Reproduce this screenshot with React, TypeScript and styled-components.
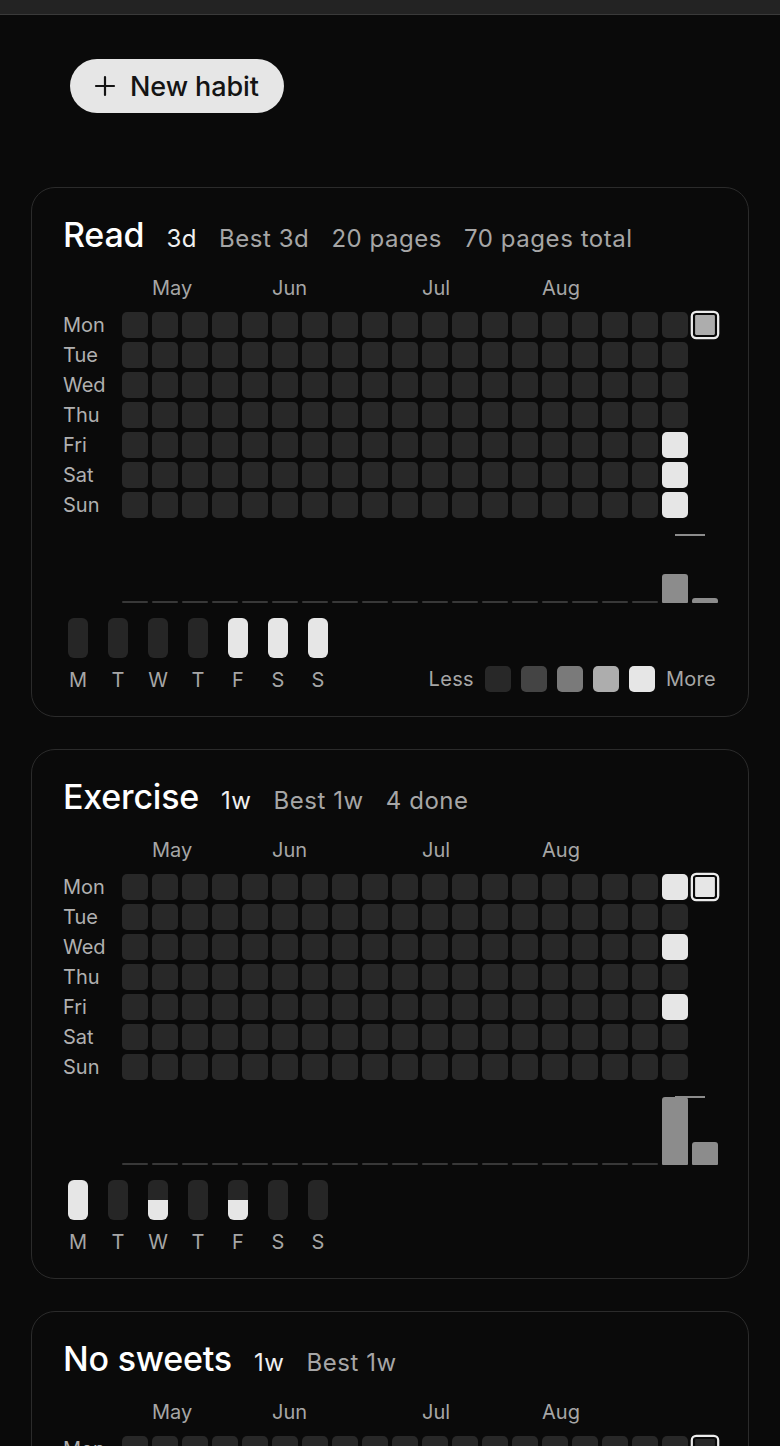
import styled, { createGlobalStyle } from "styled-components";

const GlobalStyle = createGlobalStyle`
  html, body {
    margin: 0;
    padding: 0;
    background: #0a0a0a;
    font-family: Inter, "Noto Sans", "Liberation Sans", sans-serif;
    color: #ededed;
  }
`;

const LEVELS = ["#282828", "#444444", "#7a7a7a", "#adadad", "#e6e6e6"];
const WEEKS = 20;
const DAYS = ["Mon", "Tue", "Wed", "Thu", "Fri", "Sat", "Sun"];
const SHORT = ["M", "T", "W", "T", "F", "S", "S"];
const MONTHS = [
  { label: "May", col: 1 },
  { label: "Jun", col: 5 },
  { label: "Jul", col: 10 },
  { label: "Aug", col: 14 },
];

type Habit = {
  name: string;
  stats: string[];
  // key "week-day" -> level index
  filled: Record<string, number>;
  today: number;
  weekBars: number[];
  weekdays: number[];
  legend?: boolean;
};

const habits: Habit[] = [
  {
    name: "Read",
    stats: ["3d", "Best 3d", "20 pages", "70 pages total"],
    filled: { "18-4": 4, "18-5": 4, "18-6": 4 },
    today: 3,
    weekBars: [...Array(18).fill(0), 60 / 140, 10 / 140],
    weekdays: [0, 0, 0, 0, 1, 1, 1],
    legend: true,
  },
  {
    name: "Exercise",
    stats: ["1w", "Best 1w", "4 done"],
    filled: { "18-0": 4, "18-2": 4, "18-4": 4 },
    today: 4,
    weekBars: [...Array(18).fill(0), 1, 1 / 3],
    weekdays: [1, 0, 0.5, 0, 0.5, 0, 0],
  },
  {
    name: "No sweets",
    stats: ["1w", "Best 1w"],
    filled: {},
    today: 0,
    weekBars: [...Array(20).fill(0)],
    weekdays: [0, 0, 0, 0, 0, 0, 0],
  },
];

const TopBar = styled.div`
  height: 14px;
  background: #232323;
  border-bottom: 1px solid #3a3a3a;
`;

const Page = styled.main`
  padding: 44px 31px 40px;
  display: flex;
  flex-direction: column;
  gap: 32px;
`;

const Toolbar = styled.div`
  padding-left: 39px;
  margin-bottom: 42px;
`;

const NewButton = styled.button`
  display: inline-flex;
  align-items: center;
  gap: 14px;
  height: 54px;
  padding: 0 25px 0 24px;
  border: none;
  border-radius: 27px;
  background: #e6e6e6;
  color: #141414;
  font-family: inherit;
  font-size: 27px;
  font-weight: 500;
  letter-spacing: -0.1px;
  cursor: pointer;
`;

const Card = styled.section`
  border: 1px solid #2b2b2b;
  border-radius: 24px;
  padding: 31px 31px 24px;
`;

const Header = styled.div`
  display: flex;
  align-items: baseline;
  gap: 22px;
  height: 32px;
  line-height: 32px;
`;

const Title = styled.h2`
  margin: 0;
  font-size: 34px;
  font-weight: 500;
  color: #ffffff;
  letter-spacing: -0.2px;
`;

const Stat = styled.span<{ $strong?: boolean }>`
  font-size: 24px;
  letter-spacing: 0.55px;
  color: ${(p) => (p.$strong ? "#f0f0f0" : "#a6a6a6")};
`;

const Body = styled.div`
  display: grid;
  grid-template-columns: 59px 1fr;
  margin-top: 25px;
`;

const WeekGrid = styled.div`
  display: grid;
  grid-template-columns: repeat(${WEEKS}, 26px);
  column-gap: 4px;
`;

const MonthRow = styled(WeekGrid)`
  grid-column: 2;
  height: 24px;
  margin-bottom: 12px;
`;

const MonthLabel = styled.span<{ $col: number }>`
  grid-column: ${(p) => p.$col + 1} / span 3;
  font-size: 20px;
  line-height: 24px;
  color: #a6a6a6;
`;

const DayLabels = styled.div`
  grid-column: 1;
  display: flex;
  flex-direction: column;
  gap: 4px;
`;

const DayLabel = styled.span`
  height: 26px;
  line-height: 26px;
  font-size: 20px;
  color: #b0b0b0;
`;

const Cells = styled(WeekGrid)`
  grid-template-rows: repeat(7, 26px);
  grid-auto-flow: column;
  row-gap: 4px;
`;

const Cell = styled.div<{ $color: string; $today?: boolean; $empty?: boolean }>`
  width: 26px;
  height: 26px;
  border-radius: 5px;
  box-sizing: border-box;
  background: ${(p) => (p.$empty ? "transparent" : p.$color)};
  ${(p) =>
    p.$today &&
    `
    border: 2px solid #ececec;
    box-shadow: inset 0 0 0 2px #0a0a0a;
    transform: scale(1.1);
  `}
`;

const Chart = styled(WeekGrid)`
  grid-column: 2;
  position: relative;
  height: 70px;
  margin-top: 15px;
  align-items: end;
`;

const Bar = styled.div<{ $empty: boolean }>`
  background: ${(p) => (p.$empty ? "#383838" : "#8c8c8c")};
  border-radius: ${(p) => (p.$empty ? "1px" : "3px 3px 1px 1px")};
`;

const Marker = styled.div`
  position: absolute;
  top: 1px;
  left: 553px;
  width: 30px;
  height: 2px;
  background: #8c8c8c;
`;

const Footer = styled.div`
  display: flex;
  justify-content: space-between;
  align-items: flex-end;
  margin-top: 15px;
`;

const Weekdays = styled.div`
  display: grid;
  grid-template-columns: repeat(7, 30px);
  column-gap: 10px;
  justify-items: center;
  row-gap: 10px;
`;

const DayBar = styled.div<{ $fill: number }>`
  width: 20px;
  height: 40px;
  border-radius: 6px;
  background: linear-gradient(
    to top,
    #e6e6e6 ${(p) => p.$fill * 100}%,
    #262626 ${(p) => p.$fill * 100}%
  );
`;

const DayLetter = styled.span`
  font-size: 20px;
  line-height: 24px;
  color: #a6a6a6;
`;

const Legend = styled.div`
  display: flex;
  align-items: center;
  gap: 10px;
`;

const LegendText = styled.span`
  font-size: 20px;
  letter-spacing: 0.3px;
  color: #a6a6a6;
  margin: 0 1px;
`;

const Swatch = styled.div<{ $color: string }>`
  width: 26px;
  height: 26px;
  border-radius: 5px;
  background: ${(p) => p.$color};
`;

function PlusIcon() {
  return (
    <svg width="22" height="22" viewBox="0 0 22 22" fill="none">
      <path d="M11 2v18M2 11h18" stroke="#141414" strokeWidth="2.2" strokeLinecap="round" />
    </svg>
  );
}

function HabitCard({ habit }: { habit: Habit }) {
  const cells = [];
  for (let w = 0; w < WEEKS; w++) {
    for (let d = 0; d < 7; d++) {
      const last = w === WEEKS - 1;
      if (last && d > 0) {
        cells.push(<Cell key={`${w}-${d}`} $color="" $empty />);
        continue;
      }
      const level = last ? habit.today : habit.filled[`${w}-${d}`] ?? 0;
      cells.push(<Cell key={`${w}-${d}`} $color={LEVELS[level]} $today={last} />);
    }
  }

  return (
    <Card>
      <Header>
        <Title>{habit.name}</Title>
        {habit.stats.map((s, i) => (
          <Stat key={s} $strong={i === 0}>
            {s}
          </Stat>
        ))}
      </Header>
      <Body>
        <MonthRow>
          {MONTHS.map((m) => (
            <MonthLabel key={m.label} $col={m.col}>
              {m.label}
            </MonthLabel>
          ))}
        </MonthRow>
        <DayLabels>
          {DAYS.map((d) => (
            <DayLabel key={d}>{d}</DayLabel>
          ))}
        </DayLabels>
        <Cells>{cells}</Cells>
        <Chart>
          {habit.weekBars.map((v, i) => (
            <Bar key={i} $empty={v === 0} style={{ height: v === 0 ? 2 : Math.max(4, v * 68) }} />
          ))}
          <Marker />
        </Chart>
      </Body>
      <Footer>
        <Weekdays>
          {habit.weekdays.map((f, i) => (
            <DayBar key={`b${i}`} $fill={f} />
          ))}
          {SHORT.map((l, i) => (
            <DayLetter key={`l${i}`}>{l}</DayLetter>
          ))}
        </Weekdays>
        {habit.legend && (
          <Legend>
            <LegendText>Less</LegendText>
            {LEVELS.map((c) => (
              <Swatch key={c} $color={c} />
            ))}
            <LegendText>More</LegendText>
          </Legend>
        )}
      </Footer>
    </Card>
  );
}

export default function App() {
  return (
    <>
      <GlobalStyle />
      <TopBar />
      <Page>
        <Toolbar>
          <NewButton>
            <PlusIcon />
            New habit
          </NewButton>
        </Toolbar>
        {habits.map((h) => (
          <HabitCard key={h.name} habit={h} />
        ))}
      </Page>
    </>
  );
}
